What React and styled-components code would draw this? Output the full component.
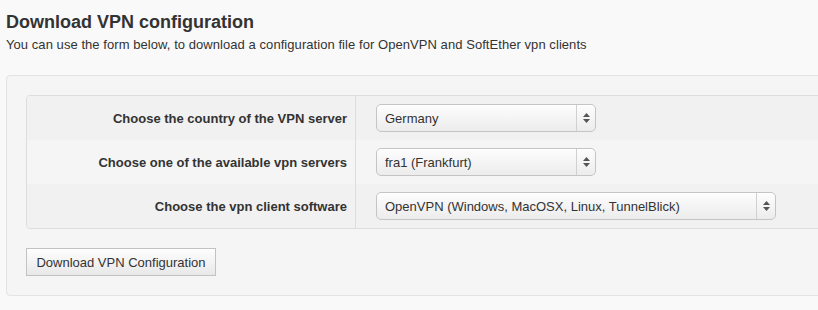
import React from "react";
import styled, { createGlobalStyle } from "styled-components";

const GlobalStyle = createGlobalStyle`
    body {
        margin: 0;
        background: #f9f9f9;
        font-family: "Liberation Sans", Arial, sans-serif;
        color: #333;
        overflow: hidden;
    }
`;

const Page = styled.div`
    padding: 11px 0 0 6px;
    height: 310px;
    box-sizing: border-box;
    overflow: hidden;
`;

const Title = styled.h2`
    margin: 0;
    font-size: 18px;
    line-height: 22px;
    font-weight: bold;
    color: #333;
`;

const Lead = styled.p`
    margin: 3px 0 0;
    font-size: 13px;
    line-height: 18px;
    letter-spacing: 0.06px;
    color: #333;
`;

const Well = styled.div`
    margin-top: 21px;
    width: 860px;
    padding: 19px;
    background: #f5f5f5;
    border: 1px solid #e3e3e3;
    border-radius: 4px;
`;

const FormTable = styled.div`
    border: 1px solid #ddd;
    border-radius: 4px;
    overflow: hidden;
`;

const Row = styled.div`
    display: flex;
    height: 44px;
    background: ${(p) => (p.$odd ? "#f1f1f1" : "#f5f5f5")};
`;

const Label = styled.div`
    width: 329px;
    flex: none;
    display: flex;
    align-items: center;
    justify-content: flex-end;
    padding-right: 8px;
    box-sizing: border-box;
    border-right: 1px solid #ddd;
    font-size: 13px;
    font-weight: bold;
    color: #333;
`;

const Field = styled.div`
    display: flex;
    align-items: center;
    padding-left: 20px;
`;

const SelectBox = styled.div`
    position: relative;
    width: ${(p) => p.$width}px;
    height: 28px;
    box-sizing: border-box;
    border: 1px solid #c4c4c4;
    border-radius: 5px;
    background: linear-gradient(#fdfdfd, #ececec);
    box-shadow: inset 0 1px 0 #fff;
`;

const NativeSelect = styled.select`
    appearance: none;
    -webkit-appearance: none;
    width: 100%;
    height: 100%;
    border: 0;
    background: transparent;
    padding: 0 0 0 8px;
    font-family: "Liberation Sans", Arial, sans-serif;
    font-size: 13px;
    color: #333;
    outline: none;
`;

const Arrows = styled.span`
    position: absolute;
    top: 0;
    right: 0;
    bottom: 0;
    width: 18px;
    border-left: 1px solid #d0d0d0;
    display: flex;
    flex-direction: column;
    align-items: center;
    justify-content: center;
    gap: 2px;
    pointer-events: none;
`;

const Button = styled.button`
    margin-top: 19px;
    width: 190px;
    height: 28px;
    border: 1px solid #c2c2c2;
    background: linear-gradient(#fefefe, #e8e8e8);
    font-family: "Liberation Sans", Arial, sans-serif;
    font-size: 13px;
    color: #333;
    padding: 0;
`;

const Select = ({ width, value }) => (
    <SelectBox $width={width}>
        <NativeSelect defaultValue={value}>
            <option>{value}</option>
        </NativeSelect>
        <Arrows>
            <svg width="7" height="4" viewBox="0 0 7 4">
                <path d="M3.5 0L7 4H0z" fill="#555" />
            </svg>
            <svg width="7" height="4" viewBox="0 0 7 4">
                <path d="M0 0h7L3.5 4z" fill="#555" />
            </svg>
        </Arrows>
    </SelectBox>
);

const ROWS = [
    { label: "Choose the country of the VPN server", value: "Germany", width: 220 },
    { label: "Choose one of the available vpn servers", value: "fra1 (Frankfurt)", width: 220 },
    {
        label: "Choose the vpn client software",
        value: "OpenVPN (Windows, MacOSX, Linux, TunnelBlick)",
        width: 400,
    },
];

export default function App() {
    return (
        <>
            <GlobalStyle />
            <Page>
                <Title>Download VPN configuration</Title>
                <Lead>
                    You can use the form below, to download a configuration file for
                    OpenVPN and SoftEther vpn clients
                </Lead>
                <Well>
                    <FormTable>
                        {ROWS.map((r, i) => (
                            <Row key={r.label} $odd={i % 2 === 0}>
                                <Label>{r.label}</Label>
                                <Field>
                                    <Select width={r.width} value={r.value} />
                                </Field>
                            </Row>
                        ))}
                    </FormTable>
                    <Button>Download VPN Configuration</Button>
                </Well>
            </Page>
        </>
    );
}
